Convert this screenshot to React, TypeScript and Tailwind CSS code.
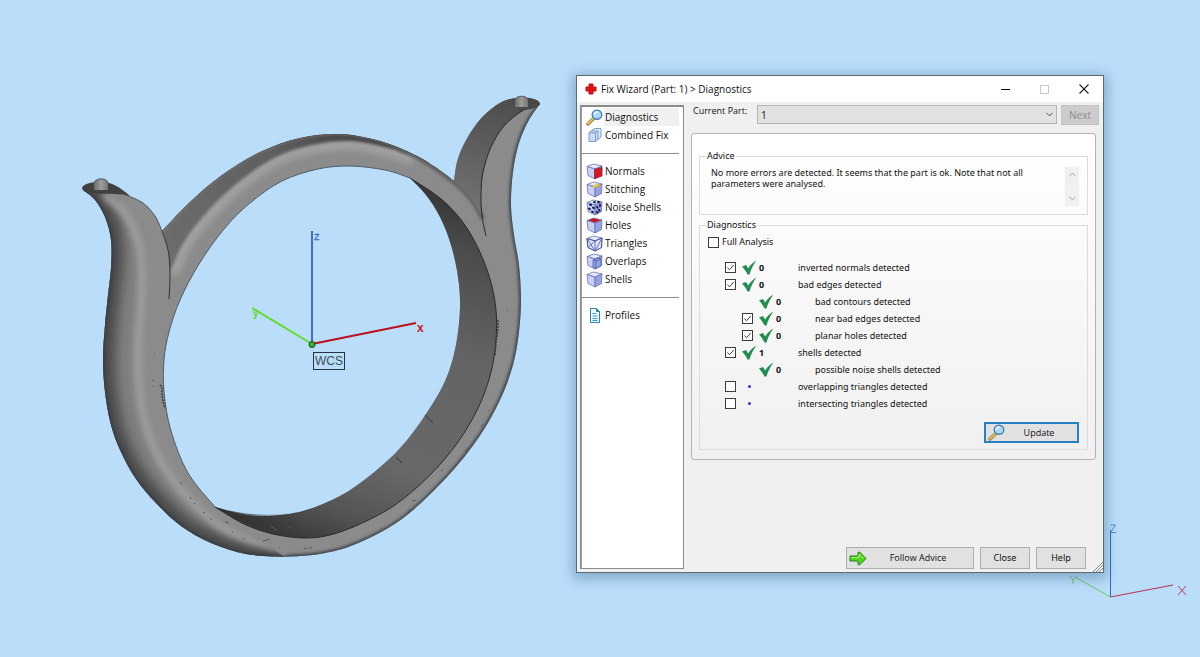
import React from "react";
import { ChevronDown, ChevronUp } from "lucide-react";

type Point = [number, number];

/** Smooth cubic segments through the points, starting from the first one. */
function seg(p: Point[]): string {
  let d = "";
  for (let i = 0; i < p.length - 1; i++) {
    const a = p[Math.max(i - 1, 0)];
    const b = p[i];
    const c = p[i + 1];
    const e = p[Math.min(i + 2, p.length - 1)];
    d += `C${b[0] + (c[0] - a[0]) / 6} ${b[1] + (c[1] - a[1]) / 6} ${c[0] - (e[0] - b[0]) / 6} ${c[1] - (e[1] - b[1]) / 6} ${c[0]} ${c[1]}`;
  }
  return d;
}
const line = (p: Point[]) => `M${p[0][0]} ${p[0][1]}${seg(p)}`;
const shape = (...parts: Point[][]) =>
  parts.map((p, i) => (i === 0 ? line(p) : `L${p[0][0]} ${p[0][1]}${seg(p)}`)).join("") + "Z";
const rev = (p: Point[]) => [...p].reverse();

const outerLeft: Point[] = [[83, 190], [95, 200], [105, 217], [111, 240], [111, 268], [108, 295], [105, 325], [103, 358], [105, 392], [111, 425], [121, 452], [136, 479], [156, 503], [181, 526], [211, 543], [246, 554], [285, 557]];
const outerRight: Point[] = [[285, 557], [320, 554], [356, 544], [402, 519], [447, 477], [479, 437], [500, 400], [513, 365], [519, 332], [521, 300], [519, 265], [514, 235], [511, 205], [513, 172], [519, 143], [529, 120], [540, 104]];
const hornTop: Point[] = [[540, 104], [536, 100], [524, 98], [510, 99], [495, 106], [478, 122], [464, 144], [457, 162], [454, 181]];
const ringTop: Point[] = [[454, 181], [438, 169], [415, 155], [380, 141], [340, 134], [300, 138], [260, 152], [222, 175], [190, 202], [162, 231]];
const leftHornTop: Point[] = [[162, 231], [155, 216], [143, 203], [126, 195]];
const hole: Point[] = [[410, 178], [385, 170], [350, 166], [318, 169], [282, 181], [250, 203], [224, 229], [199, 264], [180, 300], [169, 332], [164, 360], [164, 392], [171, 431], [188, 473], [215, 507]];
const wallBack: Point[] = [[215, 507], [240, 514], [268, 516], [303, 511], [340, 496], [372, 474], [402, 446], [428, 411], [446, 379], [456, 345], [460, 308], [458, 277], [451, 245], [440, 217], [426, 195], [410, 178]];
const wallFront: Point[] = [[410, 178], [440, 198], [462, 221], [478, 248], [490, 279], [496, 310], [496, 340], [491, 372], [479, 406], [458, 442], [430, 475], [395, 505], [360, 524], [330, 535], [304, 538], [273, 534], [244, 524], [215, 507]];
const ridge: Point[] = [[104, 195], [123, 211], [135, 233], [141, 260], [141, 300], [138, 340], [138, 375], [144, 420], [160, 461], [186, 496], [218, 525], [252, 541], [290, 550]];
const armRidge: Point[] = [[170, 272], [184, 242], [208, 211], [240, 181], [276, 157], [312, 145], [350, 141], [385, 147], [415, 156]];
const hornSeam: Point[] = [[162, 231], [168, 250], [170, 273], [169, 299]];
const innerHornEdge: Point[] = [[540, 104], [522, 111], [504, 126], [491, 147], [483, 172], [481, 195], [482, 216]];

const SILHOUETTE = shape(outerLeft, outerRight, hornTop, ringTop, leftHornTop) + shape(hole, wallBack);
const LEFT_BODY = shape(outerLeft, [[285, 557], [215, 507]], rev(hole).slice(0, 5), [[169, 299], [170, 273], [168, 250], [162, 231]], leftHornTop);
const SCRATCHES =
  "M154 353l1 1M152 380l2 1M153 386v1M180 482l2 3M190 497l1 2M194 503l1 1M203 512l2 1M210 518l2 2M225 522l4 1M232 532l1 1M243 538l2 1M263 541l4-1 3-1M279 547l1 1M304 548l3 1M309 548h3M331 544h1M380 528l2 1M408 511l3-1M412 501l4-1M428 494l1-1M441 470l2 1M449 474l2-4M463 456l2-2M465 451l3-3M481 427l2-3M488 411l1-1M271 526l6 5M289 527l2 1M334 518h3M350 510l8 3M507 310v1";

function Ring() {
  return (
    <svg className="absolute left-[80px] top-[90px] h-[470px] w-[465px]" viewBox="80 90 465 470" role="img" aria-label="Ring model with WCS axes">
      <defs>
        <clipPath id="body"><path d={SILHOUETTE} clipRule="evenodd" /></clipPath>
        <clipPath id="left"><path d={LEFT_BODY} /></clipPath>
        <filter id="b1" x="-20%" y="-20%" width="140%" height="140%"><feGaussianBlur stdDeviation="1.5" /></filter>
        <filter id="b3" x="-20%" y="-20%" width="140%" height="140%"><feGaussianBlur stdDeviation="3" /></filter>
        <filter id="b7" x="-30%" y="-20%" width="160%" height="140%"><feGaussianBlur stdDeviation="6" /></filter>
        <linearGradient id="wall" gradientUnits="userSpaceOnUse" x1="420" y1="180" x2="310" y2="540">
          <stop offset="0" stopColor="#343434" />
          <stop offset=".14" stopColor="#4b4b4b" />
          <stop offset=".42" stopColor="#646464" />
          <stop offset=".75" stopColor="#686868" />
          <stop offset=".9" stopColor="#555" />
          <stop offset="1" stopColor="#3c3c3c" />
        </linearGradient>
        <linearGradient id="wallEnd" x1="0" x2="1">
          <stop offset="0" stopColor="#303030" />
          <stop offset="1" stopColor="#303030" stopOpacity="0" />
        </linearGradient>
        <linearGradient id="horn" gradientUnits="userSpaceOnUse" x1="515" y1="98" x2="465" y2="210">
          <stop offset="0" stopColor="#4c4c4c" />
          <stop offset=".5" stopColor="#5e5e5e" />
          <stop offset="1" stopColor="#747474" />
        </linearGradient>
        <linearGradient id="knob" x1="0" x2="1">
          <stop offset="0" stopColor="#6d6d6d" />
          <stop offset=".5" stopColor="#9c9c9c" />
          <stop offset="1" stopColor="#777" />
        </linearGradient>
        <linearGradient id="arm" gradientUnits="userSpaceOnUse" x1="170" y1="250" x2="420" y2="150">
          <stop offset="0" stopColor="#6c6c6c" />
          <stop offset=".5" stopColor="#5e5e5e" />
          <stop offset=".75" stopColor="#484848" />
          <stop offset="1" stopColor="#3a3a3a" />
        </linearGradient>
      </defs>
      <path d={SILHOUETTE} fill="#8b8b8b" fillRule="evenodd" />
      <g clipPath="url(#body)" fill="none">
        <path d={line(armRidge)} stroke="#a0a0a0" strokeWidth="18" filter="url(#b3)" />
        <path d={shape(ringTop, armRidge)} fill="url(#arm)" filter="url(#b1)" />
        <path d={line([[400, 149], [425, 161], [454, 182], [472, 200], [483, 219]])} stroke="#626262" strokeWidth="5" filter="url(#b1)" />
        <path d={line(outerRight)} stroke="#3c444b" strokeWidth="4" filter="url(#b1)" />
        <path d={line(ringTop)} stroke="#444" strokeWidth="1" />
      </g>
      <g clipPath="url(#left)" fill="none">
        <path d={LEFT_BODY} fill="#8b8b8b" />
        <path d={shape(outerLeft, rev(ridge))} fill="#808080" filter="url(#b3)" />
        <path d={line(outerLeft)} stroke="#4a4a4a" strokeWidth="24" filter="url(#b7)" />
        <path d={line(ridge)} stroke="#a0a0a0" strokeWidth="7" filter="url(#b3)" />
        <path d={line(outerLeft)} stroke="#333b42" strokeWidth="3" filter="url(#b1)" />
      </g>
      <path d={line(hornSeam)} fill="none" stroke="#333" strokeWidth="1" />
      <path d={line(leftHornTop)} fill="none" stroke="#555" strokeWidth="1" />
      <path d={shape(wallFront, wallBack)} fill="url(#wall)" />
      <path d="M215 507C240 514 268 518 303 511L304 538C273 537 244 524 215 507Z" fill="url(#wallEnd)" />
      <path d={line(wallFront)} fill="none" stroke="#2b2b2b" strokeWidth="1" />
      <path d={line(hole)} fill="none" stroke="#4e5d69" strokeWidth="1" />
      <path d={shape(hornTop, [[454, 181], [470, 197], [482, 216]], rev(innerHornEdge))} fill="url(#horn)" />
      <path d={line([...innerHornEdge, [486, 236]])} fill="none" stroke="#292929" strokeWidth="1" />
      <path d="M425 415l8 8M396 457l6 6" stroke="#333" strokeWidth="1" />
      <path d={SCRATCHES} fill="none" stroke="#5a5a5a" strokeWidth="1" />
      <path d="M160 385l2 2v8l1 6 2 7M498 320v10l-2 12-1 14" fill="none" stroke="#3c3c3c" strokeWidth="1.500" strokeDasharray="2 1" />

      <path d="M82 188C84 183 92 182 102 182C112 182 121 188 130 196C113 192 98 195 88 193C85 192 82 190 82 188Z" fill="#414141" />
      <path d="M94 183C95 178 107 177 108 183V190H94Z" fill="url(#knob)" />
      <path d="M94 183C95 178 107 177 108 183" fill="none" stroke="#555" />
      <path d="M512 99C524 97 536 97 540 103C538 109 529 109 520 111C517 108 513 103 512 99Z" fill="#484848" />
      <path d="M515 100C516 95 527 95 528 100V107H515Z" fill="url(#knob)" />
      <path d="M515 100C516 95 527 95 528 100" fill="none" stroke="#555" />

      <path d="M312 344L252 308" stroke="#62db28" strokeWidth="2" />
      <path d="M312 344L416 323" stroke="#bd1020" strokeWidth="2" />
      <path d="M312 344V231" stroke="#416bd0" strokeWidth="2" />
      <circle cx="312" cy="344.500" r="3" fill="#35b52d" stroke="#154a20" />
      <rect x="313.500" y="352.500" width="31" height="17" fill="none" stroke="#23333f" />
      <text x="315" y="365" fontSize="12" fill="#3c4c59" className="font-['Liberation_Sans']">WCS</text>
      <text x="314" y="240" fontSize="11" fill="#416bd0" stroke="#416bd0" strokeWidth=".3" className="font-['Liberation_Sans']">z</text>
      <text x="417" y="332" fontSize="12" fontWeight="bold" fill="#c51a2b" className="font-['Liberation_Sans']">x</text>
      <text x="253" y="317" fontSize="11" fill="#62db28" stroke="#62db28" strokeWidth=".4" className="font-['Liberation_Sans']">y</text>
    </svg>
  );
}

function CornerAxes() {
  return (
    <svg className="absolute left-[1065px] top-[520px] h-[85px] w-[125px]" viewBox="1065 520 125 85" fill="none" role="img" aria-label="View orientation">
      <path d="M1110.500 597V530" stroke="#3d63cc" />
      <path d="M1110.500 597L1075 577" stroke="#6ccc60" />
      <path d="M1110.500 597L1173 585" stroke="#b8304f" />
      <path d="M1110.500 525H1115.500L1110.500 532.500H1116" stroke="#5b80da" />
      <path d="M1070 576L1073 580L1077 576M1073 580V584" stroke="#6ccc60" />
      <path d="M1178 586L1186 595M1186 586L1178 595" stroke="#c23c50" />
    </svg>
  );
}

function Magnifier() {
  return (
    <svg viewBox="0 0 17 17" className="size-[17px] shrink-0" fill="none" aria-hidden="true">
      <path d="M2 15L7.500 9.500" stroke="#8f7a48" strokeWidth="3.400" strokeLinecap="round" />
      <path d="M2 14.700L7 9.700" stroke="#e8bc55" strokeWidth="2" strokeLinecap="round" />
      <ellipse cx="11" cy="5.800" rx="4.800" ry="4.500" fill="#a9d8fa" stroke="#4a7fb5" strokeWidth="1.400" />
      <path d="M8 5.500C8.500 3.500 10 2.800 12 3" stroke="#edf9ff" strokeWidth="1.300" />
    </svg>
  );
}

type CubeKind = "normals" | "stitching" | "noise" | "holes" | "triangles" | "overlaps" | "shells";

function Cube({ kind }: { kind: CubeKind }) {
  return (
    <svg viewBox="0 0 17 17" className="size-[17px] shrink-0" fill="none" strokeLinejoin="round" aria-hidden="true">
      <path d="M1 3.500L7.500 1L16 3L9 6Z" fill={kind === "holes" ? "#d01028" : "#e4eaff"} stroke="#6a72ad" strokeWidth=".8" />
      <path d="M1 3.500L9 6V16L2 12.500Z" fill="#c6d0f8" stroke="#6a72ad" strokeWidth=".8" />
      <path d="M9 6L16 3L15.500 12.500L9 16Z" fill="#97a2e0" stroke="#6a72ad" strokeWidth=".8" />
      {kind === "normals" && <path d="M8.500 6.500L16 4.500V13L8.500 15.500Z" fill="#d9151d" stroke="#8d2545" strokeWidth=".8" />}
      {kind === "stitching" && <path d="M8.500 6.500L14.500 4L12 3L6.500 5.500Z" fill="#f4e27a" stroke="#c9ab2c" strokeWidth=".9" />}
      {kind === "noise" && (
        <path d="M4 5.500l1 .5M7 8.500l.8.600M3 9.500l.8.600M6 12.500l.8.600M8 3l1 .4M12 3h1M11 8l.6.600M14 6v1M13 11l.6.600M11 13l.6.600" stroke="#141c48" strokeWidth="2" strokeLinecap="round" />
      )}
      {kind === "triangles" && (
        <>
          <path d="M1 3.500L9 6L16 3L15.500 12.500L9 16L2 12.500Z" fill="#dfe5ff" stroke="#454caa" />
          <path d="M1 3.500L9 16L16 3M9 6V16M9 6L2 12.500" stroke="#5a62b8" strokeWidth=".9" />
        </>
      )}
      {kind === "overlaps" && (
        <>
          <path d="M7 7L12 5L15 6V13L10 15.500L7 14Z" fill="#8fa3e8" stroke="#5361a5" strokeWidth=".8" />
          <path d="M7 7L10 8V15.500M10 8L15 6" stroke="#5361a5" strokeWidth=".8" />
        </>
      )}
    </svg>
  );
}

function Boxes() {
  return (
    <svg viewBox="0 0 17 17" className="size-[17px] shrink-0" fill="none" strokeLinejoin="round" aria-hidden="true">
      <path d="M6 3L9 1.500H15V10L12 12.500H6Z" fill="#dce9fb" stroke="#7f9dc9" />
      <path d="M3 5.500L5 4H12V12L10 14.500H3Z" fill="#c7dbf7" stroke="#7f9dc9" />
      <path d="M3 6H9.500V14.500M9.500 6L12 4" stroke="#7f9dc9" />
    </svg>
  );
}

function Profile() {
  return (
    <svg viewBox="0 0 17 17" className="size-[17px] shrink-0" fill="none" aria-hidden="true">
      <path d="M4.500 1.500H10.500L13.500 4.500V15.500H4.500Z" fill="#f0fbff" stroke="#2787a8" />
      <path d="M10.500 1.500V4.500H13.500" fill="#2787a8" stroke="#2787a8" />
      <path d="M6.500 6.500H10M6.500 9H11.500M6.500 11.500H11.500M6.500 13.500H11.500" stroke="#2c9bc0" />
    </svg>
  );
}

function NavItem({ icon, label, active = false }: { icon: React.ReactNode; label: string; active?: boolean }) {
  return (
    <li>
      <button type="button" aria-current={active ? "page" : undefined} className="flex h-[18px] w-full items-center gap-px text-left">
        {icon}
        <span className={active ? "flex-1 bg-[#f0f0f0] pl-px leading-[18px]" : "flex-1 pl-px leading-[18px]"}>{label}</span>
      </button>
    </li>
  );
}

function Separator() {
  return (
    <li role="separator" className="-ml-1 flex h-[18px] items-center">
      <div className="h-px w-full bg-[#8c8c8c]" />
    </li>
  );
}

function CheckBox({ checked = false }: { checked?: boolean }) {
  return (
    <span className="grid size-[11px] shrink-0">
      <input type="checkbox" defaultChecked={checked} className="peer col-start-1 row-start-1 size-[11px] appearance-none border border-[#3c3c3c] bg-white" />
      <svg viewBox="0 0 11 11" fill="none" className="pointer-events-none invisible col-start-1 row-start-1 size-[11px] peer-checked:visible" aria-hidden="true">
        <path d="M2.500 5.500L4.500 7.800L8.700 3" stroke="#444" strokeWidth="1" />
      </svg>
    </span>
  );
}

function Tick() {
  return (
    <svg viewBox="0 0 15 15" className="size-[15px]" aria-hidden="true">
      <path d="M0 6.500L4 5L6.200 8.500C8 5.500 10.500 2.500 14.500 0.500C11.500 4.500 9 9 7.500 14.500H5.500C4 11.500 2.500 9 0 6.500Z" fill="#238c50" />
    </svg>
  );
}

interface Check {
  label: string;
  count?: number;
  checked?: boolean;
  nested?: boolean;
}

const CHECKS: Check[] = [
  { label: "inverted normals detected", count: 0, checked: true },
  { label: "bad edges detected", count: 0, checked: true },
  { label: "bad contours detected", count: 0, nested: true },
  { label: "near bad edges detected", count: 0, checked: true, nested: true },
  { label: "planar holes detected", count: 0, checked: true, nested: true },
  { label: "shells detected", count: 1, checked: true },
  { label: "possible noise shells detected", count: 0, nested: true },
  { label: "overlapping triangles detected", checked: false },
  { label: "intersecting triangles detected", checked: false },
];

function CheckRow({ label, count, checked, nested }: Check) {
  return (
    <li className={nested ? "ml-[17px]" : ""}>
      <label className="grid h-[17px] grid-cols-[17px_17px_39px_1fr] items-center">
        <span>{checked !== undefined && <CheckBox checked={checked} />}</span>
        {count !== undefined ? <Tick /> : <span className="ml-[6px] size-[3px] rounded-full bg-[#3434d0]" />}
        <span className="font-bold">{count}</span>
        <span>{label}</span>
      </label>
    </li>
  );
}

const FOOTER_BUTTON = "flex h-[22px] items-center justify-center border border-[#adadad] bg-[#e1e1e1]";

function FixWizard() {
  return (
    <section
      aria-label="Fix Wizard"
      className="absolute left-[576px] top-[75px] flex h-[498px] w-[528px] flex-col border border-[#5c6b78] bg-[#f0f0f0] font-['Open_Sans','Noto_Sans',sans-serif] text-[10px] leading-[12px] text-[#111] shadow-[0_3px_12px_3px_rgba(50,90,130,0.4)]"
    >
      <header className="flex h-[26px] shrink-0 items-center bg-white pl-[7px]">
        <svg viewBox="0 0 14 14" className="size-[14px]" aria-hidden="true">
          <path d="M5 2H9V5H12V9H9V12H5V9H2V5H5Z" fill="#e01018" stroke="#c80c14" />
        </svg>
        <h1 className="ml-[3px] flex-1 text-[10px]">Fix Wizard (Part: 1) &gt; Diagnostics</h1>
        <button type="button" aria-label="Minimize" className="flex h-full w-[39px] items-center justify-center">
          <span className="h-px w-[9px] bg-black" />
        </button>
        <button type="button" aria-label="Maximize" disabled className="flex h-full w-[39px] items-center justify-center">
          <span className="size-[9px] border border-[#c8c8c8]" />
        </button>
        <button type="button" aria-label="Close window" className="flex h-full w-[39px] items-center justify-center">
          <svg viewBox="0 0 10 10" className="size-[10px]" aria-hidden="true">
            <path d="M.5 .5L9.500 9.500M9.500 .5L.5 9.500" stroke="#222" strokeWidth="1.100" />
          </svg>
        </button>
      </header>

      <div className="flex min-h-0 flex-1 pl-[3px] pt-[3px]">
        <nav aria-label="Fix steps" className="mb-[3px] w-[104px] shrink-0 border border-t-2 border-[#8a8a8a] bg-white pl-[5px] pr-1 pt-px shadow-[inset_1px_0_0_#a0a0a0]">
          <ul>
            <NavItem icon={<Magnifier />} label="Diagnostics" active />
            <NavItem icon={<Boxes />} label="Combined Fix" />
            <Separator />
            <NavItem icon={<Cube kind="normals" />} label="Normals" />
            <NavItem icon={<Cube kind="stitching" />} label="Stitching" />
            <NavItem icon={<Cube kind="noise" />} label="Noise Shells" />
            <NavItem icon={<Cube kind="holes" />} label="Holes" />
            <NavItem icon={<Cube kind="triangles" />} label="Triangles" />
            <NavItem icon={<Cube kind="overlaps" />} label="Overlaps" />
            <NavItem icon={<Cube kind="shells" />} label="Shells" />
            <Separator />
            <NavItem icon={<Profile />} label="Profiles" />
          </ul>
        </nav>

        <main className="flex min-w-0 flex-1 flex-col pl-[7px] pr-[7px]">
          <div className="flex text-[9px]">
            <label htmlFor="part" className="w-[66px] pl-[2px]">Current Part:</label>
            <div className="mr-1 grid h-[19px] flex-1">
              <select id="part" className="col-start-1 row-start-1 appearance-none border border-[#b5b5b5] bg-[#e1e1e1] pl-[3px] text-[10px]">
                <option>1</option>
              </select>
              <ChevronDown className="pointer-events-none col-start-1 row-start-1 mr-[2px] size-[11px] self-center justify-self-end text-[#444]" />
            </div>
            <button type="button" disabled className="-mr-[3px] h-[20px] w-[38px] border border-[#c2c2c2] bg-[#cccccc] text-[10px] text-[#8b8b8b]">Next</button>
          </div>

          <div className="mt-2 rounded-[3px] border border-[#b4b4b4] bg-linear-to-b from-white to-[#f0f0f0] px-[7px] pb-[9px] pt-[15px] font-['Noto_Sans','Open_Sans',sans-serif] text-[9px]">
            <fieldset className="h-[66px] border border-[#dcdcdc] pl-[11px] pr-[8px]">
              <legend className="-ml-[5px] px-px leading-[14px]">Advice</legend>
              <div className="flex justify-between pt-[4px]">
                <p className="w-[342px] leading-[11px]">No more errors are detected. It seems that the part is ok. Note that not all parameters were analysed.</p>
                <div className="flex h-[39px] w-[14px] flex-col items-center justify-between bg-[#f0f0f0] py-[2px] text-[#999]">
                  <ChevronUp className="size-[11px]" />
                  <ChevronDown className="size-[11px]" />
                </div>
              </div>
            </fieldset>

            <fieldset className="mt-[3px] border border-[#dcdcdc] pb-[6px] pl-[8px] pr-[8px]">
              <legend className="-ml-[2px] px-px leading-[14px]">Diagnostics</legend>
              <label className="mt-[3px] flex h-[14px] w-fit items-center gap-[3px]">
                <CheckBox />
                Full Analysis
              </label>
              <ul className="ml-[17px] mt-[10px]">
                {CHECKS.map((c) => <CheckRow key={c.label} {...c} />)}
              </ul>
              <button type="button" className="ml-auto mt-[10px] flex h-[21px] w-[95px] items-center border-2 border-[#2880c0] bg-[#e1e1e1] pl-[2px] font-['Open_Sans','Noto_Sans',sans-serif]">
                <Magnifier />
                <span className="flex-1 pr-1 text-center">Update</span>
              </button>
            </fieldset>
          </div>

          <footer className="mb-[3px] mr-[3px] mt-auto flex justify-end gap-[6px] pr-[7px] text-[9px]">
            <button type="button" className={`${FOOTER_BUTTON} w-[128px] pl-[2px]`}>
              <svg viewBox="0 0 18 15" className="h-[15px] w-[18px]" aria-hidden="true">
                <path d="M1 5H9V1.500L10.500 1L17 7.500L10.500 14L9 13.500V10H1Z" fill="#51d51f" stroke="#267c1c" strokeLinejoin="round" />
                <path d="M2 6.500H10V3.500L14.500 7.500" fill="none" stroke="#a2f575" />
              </svg>
              <span className="flex-1 pr-1 text-center">Follow Advice</span>
            </button>
            <button type="button" className={`${FOOTER_BUTTON} w-[50px] font-['Noto_Sans','Open_Sans',sans-serif]`}>Close</button>
            <button type="button" className={`${FOOTER_BUTTON} w-[50px] font-['Noto_Sans','Open_Sans',sans-serif]`}>Help</button>
          </footer>
        </main>
      </div>
      <svg viewBox="0 0 10 10" className="absolute bottom-0 right-0 size-[10px]" aria-hidden="true">
        <path d="M0 10L10 0M3 10L10 3M6 10L10 6" stroke="#888" />
      </svg>
    </section>
  );
}

export default function App() {
  return (
    <div className="relative min-h-screen overflow-hidden bg-[#badefa]">
      <Ring />
      <CornerAxes />
      <FixWizard />
    </div>
  );
}
